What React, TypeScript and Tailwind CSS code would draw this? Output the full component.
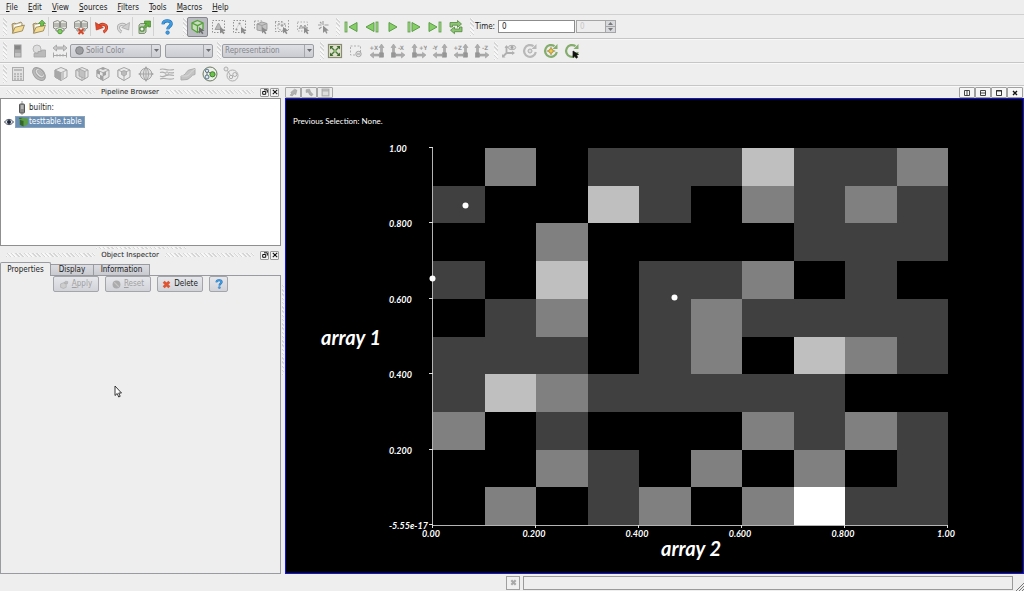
import { useState } from "react";
import type { ReactNode } from "react";

const HATCH =
  "bg-[repeating-linear-gradient(45deg,#d6d6d6_0_1px,#f8f8f8_1px_2px,#eeeeee_2px_3px)]";

function Icon({ children, size = "size-4" }: { children: ReactNode; size?: string }) {
  return (
    <svg viewBox="0 0 16 16" className={`${size} shrink-0`} fill="none" aria-hidden="true">
      {children}
    </svg>
  );
}

function ToolButton({ label, pressed, faded, children }: { label: string; pressed?: boolean; faded?: boolean; children: ReactNode }) {
  return (
    <button
      type="button"
      aria-label={label}
      className={`flex h-5 w-[21px] shrink-0 items-center justify-center rounded-[2px] ${
        pressed ? "border border-[#85878c] bg-[#b9bbc1]" : ""
      } ${faded ? "opacity-75" : ""}`}
    >
      <Icon>{children}</Icon>
    </button>
  );
}

function Handle() {
  return <span className={`h-[18px] w-1 shrink-0 ${HATCH}`} />;
}

function Separator() {
  return <span className="-ml-px h-[19px] w-px shrink-0 bg-[#d2d2d2]" />;
}

function Toolbar({ label, height = "h-6", children }: { label: string; height?: string; children: ReactNode }) {
  return (
    <div role="toolbar" aria-label={label} className={`flex shrink-0 items-center border-b border-[#c6c6c6] pl-[3px] shadow-[0_1px_0_#f8f8f8] ${height}`}>
      {children}
    </div>
  );
}

function Combo({ label, value, width, icon }: { label: string; value: string; width: string; icon?: ReactNode }) {
  return (
    <span className={`flex h-[14px] shrink-0 items-center rounded-[2px] border border-[#9b9da3] bg-linear-to-b from-[#dfe0e5] to-[#cbccd2] ${width}`}>
      {icon}
      <select aria-label={label} disabled className="h-3 min-w-0 flex-1 appearance-none bg-transparent pl-[2px] leading-3 text-[#85878b] opacity-100">
        <option>{value}</option>
      </select>
      <span className="flex h-3 w-[9px] items-center justify-center border-l border-[#a5a7ad]">
        <svg viewBox="0 0 5 3" className="h-[3px] w-[5px]"><path d="M0 0h5L2.5 3z" fill="#6b6d72" /></svg>
      </span>
    </span>
  );
}

/* ---------- icon drawings ---------- */

const Folder = (
  <>
    <path d="M2 5l3-1 1 1 5-2 1 1v3l-9 7z" fill="#d9c48c" stroke="#8d7a4a" strokeWidth=".8" />
    <path d="M3.5 6l8-2.2V10l-7 4z" fill="#fdfdfa" stroke="#b9b29a" strokeWidth=".5" />
    <path d="M2.4 14.3L5 8.3l9.4-2.2-2 5.8z" fill="#f5dc94" stroke="#8d7a4a" strokeWidth=".8" />
  </>
);
const Server = (
  <>
    <path d="M1.5 3l4-1.5 2 1v6l-4 1.5-2-1zM14.5 3l-4-1.5-2 1v6l4 1.5 2-1z" fill="#e4e4de" stroke="#85857e" strokeWidth=".9" />
    <path d="M2 5h5M9 5h5M2 7h5M9 7h5" stroke="#85857e" strokeWidth=".9" />
    <path d="M4 10v2h8v-2" stroke="#85857e" strokeWidth="1" />
  </>
);
const Arrow = <path d="M9 8v6.500l1.700-1.500 1.500 2.200 1.300-.9-1.500-2.100 2.500-.5z" fill="#6c6c6c" />;
const Dotted = <rect x="1.500" y="1.500" width="12" height="12" stroke="#777" strokeWidth="1" strokeDasharray="1.500 1.500" />;
const Grip = "#9a9a9a";

function Cube({ stroke = "#8f8f8f", fill = "#dcdcdc", side = "#a9a9a9" }) {
  return (
    <>
      <path d="M8 1.500l6 2.500v7l-6 3.500L2 11V4z" fill={fill} stroke={stroke} strokeWidth="1" />
      <path d="M2 4l6 2.700v7.800L2 11z" fill={side} stroke={stroke} strokeWidth=".9" />
      <path d="M8 6.700L14 4" stroke={stroke} strokeWidth=".9" />
    </>
  );
}

function Play({ x = 4, flip = false }) {
  return flip ? (
    <path d={`M${x + 8} 3.500v9L${x} 8z`} fill="#86cf66" stroke="#5c9c48" strokeWidth="1" />
  ) : (
    <path d={`M${x} 3.500v9l8-4.500z`} fill="#86cf66" stroke="#5c9c48" strokeWidth="1" />
  );
}
function Bar({ x }: { x: number }) {
  return <rect x={x} y="3" width="2" height="10" fill="#a5dc8b" stroke="#5c9c48" strokeWidth=".8" />;
}

function AxisIcon({ text, right }: { text: string; right: boolean }) {
  return (
    <>
      <text x={right ? 8 : 0.5} y="6.500" fontSize="6" fontWeight="bold" fill={Grip}>{text}</text>
      <g transform={right ? "translate(16 0) scale(-1 1)" : undefined} fill="#adadad" stroke="#969696" strokeWidth=".5">
        <path d="M12.500 1L15 4.500h-1.500V10h-2V4.500H10z" />
        <path d="M1 12l3.500-2.700v1.800H10v2H4.500V15z" />
        <rect x="10.300" y="9.800" width="4.400" height="4.400" fill="#969696" />
      </g>
    </>
  );
}

function Orbit({ stroke, children }: { stroke: string; children?: ReactNode }) {
  return (
    <>
      <path d="M13.800 9A5.900 5.900 0 1 1 11.500 3.200" stroke={stroke} strokeWidth="2.200" />
      <path d="M9.500 6h5V1z" fill={stroke} />
      {children}
    </>
  );
}

const Question = ({ size }: { size?: string }) => (
  <Icon size={size}>
    <path d="M4 5.200C4 .6 12.600.8 12.200 5c-.2 2.400-3.400 2.500-3.400 5.200" stroke="#1f6fb5" strokeWidth="3.200" />
    <path d="M4 5.200C4 .6 12.600.8 12.200 5c-.2 2.400-3.400 2.500-3.400 5.200" stroke="#3f9be0" strokeWidth="2" />
    <circle cx="8.600" cy="13.600" r="1.800" fill="#3f9be0" stroke="#1f6fb5" strokeWidth=".6" />
  </Icon>
);

const Cross = ({ color, size }: { color: string; size?: string }) => (
  <Icon size={size}>
    <path d="M3 3l10 10M13 3L3 13" stroke={color} strokeWidth="5" />
  </Icon>
);

/* ---------- menus and toolbars ---------- */

const MENUS = ["File", "Edit", "View", "Sources", "Filters", "Tools", "Macros", "Help"];

function MenuBar() {
  return (
    <nav className="flex h-[15px] items-end border-b border-[#d0d0d0] pl-px">
      {MENUS.map((name) => (
        <button key={name} type="button" className="px-[5px] leading-[13px]">
          <span className="underline underline-offset-1">{name[0]}</span>{name.slice(1)}
        </button>
      ))}
    </nav>
  );
}

function MainToolbar() {
  return (
    <Toolbar label="Main controls">
      <Handle />
      <ToolButton label="Open">{Folder}</ToolButton>
      <ToolButton label="Save data">{Folder}<path d="M11 1l3.500 3.500h-2V7h-3V4.500h-2z" fill="#6cbf4b" stroke="#47862f" strokeWidth=".6" /></ToolButton>
      <Separator />
      <ToolButton label="Connect">{Server}<circle cx="8" cy="12.500" r="2.300" fill="#7fce60" stroke="#4b8f35" strokeWidth=".9" /></ToolButton>
      <ToolButton label="Disconnect">{Server}<path d="M5.500 10l5 5M10.500 10l-5 5" stroke="#d2492a" strokeWidth="2" /></ToolButton>
      <Separator />
      <ToolButton label="Undo">
        <path d="M4 8.500C7 3.500 13.500 5 12.500 9.500c-.4 1.800-1.500 2.800-3 3.600" stroke="#b5341b" strokeWidth="3" />
        <path d="M4 8.500C7 3.500 13.500 5 12.500 9.500c-.4 1.800-1.500 2.800-3 3.600" stroke="#e8583a" strokeWidth="1.800" />
        <path d="M1.500 3.500l.8 7.500 7-2.500z" fill="#e0492b" stroke="#b5341b" strokeWidth=".7" />
      </ToolButton>
      <ToolButton label="Redo">
        <path d="M12 8.500C9 3.500 2.500 5 3.500 9.500c.4 1.800 1.500 2.800 3 3.600" stroke="#a2a2a2" strokeWidth="3" />
        <path d="M12 8.500C9 3.500 2.500 5 3.500 9.500c.4 1.800 1.500 2.800 3 3.600" stroke="#dadada" strokeWidth="1.600" />
        <path d="M14.500 3.500l-.8 7.500-7-2.500z" fill="#cfcfcf" stroke="#a2a2a2" strokeWidth=".7" />
      </ToolButton>
      <Separator />
      <ToolButton label="Auto apply">
        <path d="M3 6l1.500-1.500H10V13l-1.500 1.500H3z" fill="#c3cdbb" stroke="#7d9470" />
        <circle cx="6" cy="10" r="2.200" fill="#f4f8f1" stroke="#5a8d46" strokeWidth="1.300" />
        <path d="M8.500 2h6v6h-2V6.500L9.500 9 8 7.500 10.500 4.500h-2z" fill="#62b040" stroke="#47862f" strokeWidth=".7" />
      </ToolButton>
      <Separator />
      <button type="button" aria-label="Help" className="flex h-5 w-[25px] items-center justify-center"><Question /></button>
      <span className="w-1" />
      <Handle />
      <ToolButton label="Interact" pressed>
        <path d="M7.500 1.500L13 4v6l-5.500 3.500L2 10V4z" fill="#c9dcc2" stroke="#55a238" strokeWidth="1.300" />
        <path d="M2 4l5.500 2.700L13 4M7.500 6.700v6.800" stroke="#55a238" strokeWidth="1.300" />
        {Arrow}
      </ToolButton>
      <ToolButton label="Select cells on" faded>{Dotted}<path d="M7.500 4l3.500 6.500H4z" fill="#a8a8a8" stroke="#888" />{Arrow}</ToolButton>
      <ToolButton label="Select points on" faded>{Dotted}<path d="M7.500 4l3.500 6.500M7.500 4L4 10.500" stroke="#aaa" strokeDasharray="1 1" /><circle cx="7.500" cy="4.500" r="1" fill="#777" /><circle cx="4.500" cy="10.500" r="1" fill="#777" />{Arrow}</ToolButton>
      <ToolButton label="Select cells through" faded><path d="M1.500 2h9M1.500 2v9" stroke="#858585" strokeDasharray="1.500 1.500" /><path d="M4 5l5-2 5 1.500v6L9 12l-5-1z" fill="#b5b5b5" stroke="#858585" /><path d="M4 5l5 1.500L14 4.500M9 6.500V12" stroke="#858585" />{Arrow}</ToolButton>
      <ToolButton label="Select points through" faded><path d="M1 2.500h8M1 12.500h8M1.500 3v9M14.500 1v10" stroke="#858585" strokeDasharray="1.500 1.500" /><path d="M4 5l4-1.500L11.500 5v5L8 11.500 4 10zM4 5l4 1.500L11.500 5" stroke="#999" strokeDasharray="2 1" /><circle cx="8" cy="6.500" r="1.300" fill="#888" />{Arrow}</ToolButton>
      <ToolButton label="Select block" faded><rect x="2.500" y="3" width="10" height="9" stroke="#9a9a9a" strokeDasharray="1.500 1.500" /><path d="M4 10l2-4 2 3 2-3 2 4" stroke="#888" fill="#bdbdbd" />{Arrow}</ToolButton>
      <ToolButton label="Pick" faded><path d="M7 2v4M2 6h3.500M8.500 6h4M4 3l1.500 1.500M3 10l2.500-2" stroke="#858585" strokeWidth="1.100" /><path d="M7 6.500V14l2-1.700 1.300 2.400 1.200-.7-1.200-2.300 2.500-.3z" fill="#707070" /></ToolButton>
      <span className="w-[2px]" />
      <Handle />
      <ToolButton label="First frame"><Bar x={2} /><Play x={6} flip /></ToolButton>
      <ToolButton label="Previous frame"><Play x={2} flip /><Bar x={12} /></ToolButton>
      <ToolButton label="Play"><Play x={4} /></ToolButton>
      <ToolButton label="Next frame"><Bar x={2} /><Play x={6} /></ToolButton>
      <ToolButton label="Last frame"><Play x={2} /><Bar x={12} /></ToolButton>
      <ToolButton label="Loop">
        <path d="M2 8V3.500h7.500V1.500L13.500 5l-4 3.300V6.200H4.500V8zM14 8v4.700H6.500v2L2.500 11.200l4-3.200v2h5V8z" fill="#8cc573" stroke="#54883d" strokeWidth=".8" />
      </ToolButton>
      <span className="w-1" />
      <Handle />
      <label htmlFor="time" className="shrink-0 pl-px">Time:</label>
      <input id="time" defaultValue="0" className="ml-[3px] h-[13px] w-[77px] border border-[#8c8c8c] bg-white pl-[3px] leading-3 outline-none" />
      <input aria-label="Time step" disabled defaultValue="0" className="ml-px h-[13px] w-[30px] border border-[#a5a5a5] bg-[#ededed] pl-[3px] leading-3 text-[#c8c8c8]" />
      <span className="flex h-[13px] w-[10px] flex-col border border-l-0 border-[#a5a5a5] bg-[#d8d9dd]">
        <button type="button" aria-label="Step up" className="flex flex-1 items-center justify-center border-b border-[#a5a5a5]"><svg viewBox="0 0 5 3" className="h-[3px] w-[5px]"><path d="M0 3h5L2.500 0z" fill="#777" /></svg></button>
        <button type="button" aria-label="Step down" className="flex flex-1 items-center justify-center"><svg viewBox="0 0 5 3" className="h-[3px] w-[5px]"><path d="M0 0h5L2.500 3z" fill="#777" /></svg></button>
      </span>
    </Toolbar>
  );
}

function DisplayToolbar() {
  return (
    <Toolbar label="Display controls">
      <Handle />
      <ToolButton label="Color legend">
        <rect x="4.500" y="2" width="6.500" height="12" fill="#a8a8a8" stroke="#9b9b9b" />
        <rect x="5" y="2.500" width="5.500" height="4" fill="#858585" /><rect x="5" y="10" width="5.500" height="3.500" fill="#c2c2c2" />
      </ToolButton>
      <ToolButton label="Edit color map" faded><circle cx="6" cy="6" r="4" fill="#d8d8d8" stroke="#a5a5a5" /><path d="M3 10.500h4v-2h3.500V7h4v7H3z" fill="#a9a9a9" stroke="#8d8d8d" strokeWidth=".8" /></ToolButton>
      <ToolButton label="Rescale range"><path d="M1 5l3.500-3v2h7V2L15 5l-3.500 3V6h-7v2z" fill="#c9c9c9" stroke="#999" strokeWidth=".7" /><path d="M1.500 9.500v5M14.500 9.500v5M1.500 12.500h13M5 11v2.500M8 11v2.500M11 11v2.500" stroke="#a8a8a8" /></ToolButton>
      <Combo label="Color by" value="Solid Color" width="w-[91px]" icon={<svg viewBox="0 0 10 10" className="ml-1 size-[9px] shrink-0"><circle cx="5" cy="5" r="4.300" fill="#9c9da0" stroke="#77797d" /></svg>} />
      <span className="w-1" />
      <Combo label="Component" value="" width="w-[48px]" />
      <span className="w-1" />
      <Handle />
      <span className="w-px" />
      <Combo label="Representation" value="Representation" width="w-[92px]" />
      <span className="w-[6px]" />
      <Handle />
      <ToolButton label="Reset camera">
        <rect x="1.500" y="1.500" width="13" height="13" fill="#dfe2cf" stroke="#8a8c74" strokeWidth="1.200" />
        <path d="M4 4l8 8M12 4l-8 8" stroke="#4f7340" strokeWidth="1.400" />
        <path d="M3 3h3.500L3 6.500zM13 3v3.500L9.500 3zM3 13V9.500L6.500 13zM13 13H9.500L13 9.500z" fill="#3f6b2c" />
        <circle cx="8" cy="8" r="1.500" fill="#86bb6c" />
      </ToolButton>
      <ToolButton label="Zoom to box"><rect x="2.500" y="3" width="10" height="9" stroke="#b0b0b0" strokeDasharray="2 1.500" /><circle cx="10.500" cy="11" r="2.700" fill="#e5e5e5" stroke="#a5a5a5" /><path d="M9 11h3" stroke="#999" /></ToolButton>
      <ToolButton label="View +X"><AxisIcon text="+X" right={false} /></ToolButton>
      <ToolButton label="View -X"><AxisIcon text="-X" right /></ToolButton>
      <ToolButton label="View +Y"><AxisIcon text="+Y" right /></ToolButton>
      <ToolButton label="View -Y"><AxisIcon text="-Y" right={false} /></ToolButton>
      <ToolButton label="View +Z"><AxisIcon text="+Z" right={false} /></ToolButton>
      <ToolButton label="View -Z"><AxisIcon text="-Z" right /></ToolButton>
      <span className="w-[2px]" />
      <Handle />
      <ToolButton label="Show orientation axes" faded><path d="M5.500 3v7h7M5.500 10L2 13.500" stroke="#9c9c9c" strokeWidth="1.800" /><path d="M3.500 5l2-3 2 3zM11 8l3 2-3 2zM1 11v3.500h3.500z" fill="#9c9c9c" /><ellipse cx="11" cy="4.500" rx="3.700" ry="2.200" fill="#ddd" stroke="#999" /><circle cx="11" cy="4.500" r="1.400" fill="#8a8a8a" /></ToolButton>
      <ToolButton label="Show center"><Orbit stroke="#b8b8b8"><circle cx="8" cy="8" r="2" fill="#ddd" stroke="#adadad" /></Orbit></ToolButton>
      <ToolButton label="Reset center"><Orbit stroke="#84ad6d"><path d="M8 3.800v8.400M3.800 8h8.400" stroke="#8a8455" /><circle cx="8" cy="8" r="2.200" fill="#f0c94e" stroke="#a98326" strokeWidth=".8" /></Orbit></ToolButton>
      <ToolButton label="Pick center"><Orbit stroke="#84ad6d"><path d="M9 8v6.500l1.700-1.500 1.500 2.200 1.500-1-1.500-2.100 2.300-.6z" fill="#111" stroke="#111" strokeWidth=".7" /></Orbit></ToolButton>
    </Toolbar>
  );
}

function FilterToolbar() {
  return (
    <Toolbar label="Common filters" height="h-[23px]">
      <Handle />
      <ToolButton label="Calculator" faded><rect x="2.500" y="1.500" width="11" height="13" fill="#dedede" stroke="#989898" /><path d="M4 4h8" stroke="#aaa" strokeWidth="2" /><path d="M4 8h8M4 10.500h8M4 13h8" stroke="#999" strokeWidth="1.400" strokeDasharray="2 1" /></ToolButton>
      <ToolButton label="Contour" faded><ellipse cx="8" cy="8" rx="7.500" ry="5" transform="rotate(45 8 8)" fill="#aaa" stroke="#858585" /><ellipse cx="8" cy="7" rx="5.500" ry="3.200" transform="rotate(45 8 8)" fill="#d6d6d6" stroke="#888" /><ellipse cx="8" cy="6.500" rx="3.500" ry="1.500" transform="rotate(45 8 8)" fill="#aaa" stroke="#888" strokeWidth=".6" /></ToolButton>
      <span className="w-px" />
      <ToolButton label="Clip" faded><Cube fill="#e8e8e8" side="#909090" /><path d="M8 6.700L11 5.400v7.300l-3 1.800z" fill="#b9b9b9" /></ToolButton>
      <ToolButton label="Slice" faded><Cube fill="#e5e5e5" side="#dcdcdc" /><path d="M5 2.800l6 2.700v7.300L5 10z" fill="#b2b2b2" stroke="#8a8a8a" strokeWidth=".8" /></ToolButton>
      <ToolButton label="Threshold" faded><Cube fill="#e2e2e2" side="#e8e8e8" /><path d="M2 4l3 1.300v3.500L2 7.500zM5 8.800l3 1.400v4L5 12.700zM8 6.700l3-1.300v3.700L8 10.200zM5 2.800l3-1.200 3 1.200L8 4z" fill="#888" /></ToolButton>
      <ToolButton label="Extract subset" faded><Cube fill="#eaeaea" side="#eaeaea" /><path d="M5.500 5.500L8 4.500l2.500 1v3L8 10 5.500 8.500z" fill="#aaa" stroke="#858585" strokeWidth=".7" /></ToolButton>
      <span className="w-px" />
      <ToolButton label="Glyph" faded><circle cx="8" cy="8" r="5.800" fill="#dcdcdc" stroke="#8f8f8f" /><ellipse cx="8" cy="8" rx="2.500" ry="5.800" stroke="#8f8f8f" /><path d="M1 8h14M8 1v14" stroke="#8f8f8f" /><path d="M6.500 2.500L8 0l1.500 2.500zM6.500 13.500L8 16l1.500-2.500zM2.500 6.500L0 8l2.500 1.500zM13.500 6.500L16 8l-2.500 1.500z" fill="#8f8f8f" /></ToolButton>
      <ToolButton label="Stream tracer" faded><path d="M1 3.500c4-2 6 2 14 0M1 6.500c3-1 4 0 5 .5M1 10c3 1.500 4 .5 6-.5s4-1 8 0M1 13c5-2 8 1.500 14-.5M10 6.500c2 .8 3 .5 5 0" stroke="#999" strokeWidth="1.200" /><circle cx="8" cy="7.500" r="1.600" fill="#ddd" stroke="#999" /></ToolButton>
      <ToolButton label="Warp" faded><path d="M1 10c5-.5 5-5 8-6l6-1.500v6c-4 0-4 4-8 5l-6 .5z" fill="#b6b6b6" stroke="#999" /><path d="M1 10h6c3-.8 4-5 8-7" stroke="#d8d8d8" strokeWidth=".8" /></ToolButton>
      <span className="w-px" />
      <ToolButton label="Group datasets"><circle cx="8" cy="8" r="7" fill="#eef0ea" stroke="#6c7a62" strokeWidth="1" /><circle cx="5" cy="4.800" r="1.700" fill="#dce8f3" stroke="#55738c" /><circle cx="10.500" cy="8.300" r="2.600" fill="#6cc24a" stroke="#3d7f28" /><circle cx="5" cy="11" r="2" fill="#dce8f3" stroke="#55738c" /><path d="M5 6.500V9M6.300 6l2 1" stroke="#555" strokeWidth=".8" /></ToolButton>
      <ToolButton label="Extract level" faded><circle cx="3" cy="3" r="2" fill="#e5e5e5" stroke="#999" /><circle cx="9.500" cy="9.500" r="5.500" fill="#ececec" stroke="#999" /><circle cx="8" cy="11" r="1.700" stroke="#999" /><circle cx="11.800" cy="8.500" r="2" stroke="#999" /><path d="M4.500 4.500l3 5M9.200 10l1-.6" stroke="#999" /></ToolButton>
    </Toolbar>
  );
}

/* ---------- docks ---------- */

function DockTitle({ title }: { title: string }) {
  return (
    <div className="flex h-3 shrink-0 items-center gap-[6px] pr-[2px] pl-[6px]">
      <span className={`h-[4px] flex-1 ${HATCH}`} />
      <h2 className="text-[7px] leading-3 font-normal [font-family:'DejaVu_Sans',sans-serif]">{title}</h2>
      <span className={`h-[4px] flex-1 ${HATCH}`} />
      <span className="flex gap-px">
        <button type="button" aria-label={`Float ${title}`} className="flex size-[9px] items-center justify-center rounded-[1px] border border-[#9a9a9a] bg-[#f4f4f4]">
          <svg viewBox="0 0 6 6" className="size-[6px]" fill="none"><path d="M2 .8h3.300v2.800M.7 2.500h3v2.800h-3z" stroke="#111" strokeWidth="1" /></svg>
        </button>
        <button type="button" aria-label={`Close ${title}`} className="flex size-[9px] items-center justify-center rounded-[1px] border border-[#9a9a9a] bg-[#f4f4f4]">
          <svg viewBox="0 0 6 6" className="size-[6px]"><path d="M.8.8l4.400 4.400M5.200.8L.8 5.200" stroke="#111" strokeWidth="1.100" /></svg>
        </button>
      </span>
    </div>
  );
}

function PipelineBrowser() {
  return (
    <section>
      <DockTitle title="Pipeline Browser" />
      <ul className="h-[148px] border border-[#8f8f8f] bg-white pt-[2px]">
        <li className="flex h-[14px] items-center pl-[17px]">
          <svg viewBox="0 0 8 14" className="h-[14px] w-2"><path d="M4 0v14" stroke="#999" /><rect x="1.500" y="3" width="5" height="9" rx=".8" fill="#8c8c8c" stroke="#555" /><path d="M3 5h2.500M3 7h2.500" stroke="#ddd" /></svg>
          <span className="pl-[3px] leading-3">builtin:</span>
        </li>
        <li className="flex h-[13px] items-center">
          <button type="button" aria-label="Toggle visibility" className="flex w-[15px] justify-center">
            <svg viewBox="0 0 10 8" className="h-2 w-[10px]" fill="none"><path d="M.5 4C3 .5 7 .5 9.500 4 7 7.500 3 7.500.5 4z" fill="#dfe3ea" stroke="#39404f" strokeWidth=".9" /><circle cx="5" cy="3.900" r="2" fill="#1b2338" /></svg>
          </button>
          <span className="flex h-[10px] items-center bg-[#6b8fb5] pr-[2px] pl-[2px] text-white ring-1 ring-[#8aa3bd]">
            <svg viewBox="0 0 12 12" className="size-[11px]"><path d="M1 2h4v2L1 3z" fill="#356f26" /><path d="M2 4l3-2 6 1v6l-5 2.500L2 9.500z" fill="#5d9e48" /><path d="M2 4l4 1.500v6L2 9.500z" fill="#35672a" /></svg>
            <span className="leading-3">testtable.table</span>
          </span>
        </li>
      </ul>
    </section>
  );
}

const TABS = ["Properties", "Display", "Information"];
const TAB_WIDTHS = ["w-[51px]", "w-[44px]", "w-[57px]"];

function ObjectInspector() {
  const [tab, setTab] = useState(0);
  const button = "flex h-4 items-center justify-center gap-[3px] rounded-[2px] border border-[#a3a5aa] bg-linear-to-b from-[#e6e7eb] to-[#d2d3d9] leading-3";
  return (
    <section className="flex flex-1 flex-col">
      <DockTitle title="Object Inspector" />
      <div role="tablist" className="flex h-[14px] items-end">
        {TABS.map((name, i) => (
          <button
            key={name}
            type="button"
            role="tab"
            aria-selected={tab === i}
            onClick={() => setTab(i)}
            className={`border border-b-0 border-[#999ba0] leading-[10px] ${TAB_WIDTHS[i]} ${i > 0 ? "-ml-px" : ""} ${
              tab === i ? "relative z-10 -mb-px h-[14px] rounded-t-[2px] bg-[#eeeeee]" : "h-[11px] bg-linear-to-b from-[#dcdde2] to-[#c9cad0]"
            }`}
          >
            {name}
          </button>
        ))}
      </div>
      <div role="tabpanel" className="relative flex-1 border border-[#999ba0]">
        <div className="flex justify-center gap-[6px]">
          <button type="button" disabled className={`${button} w-[46px] text-[#a0a0a0]`}>
            <Icon size="size-[9px]"><path d="M1 7l5-2 5 2v6l-5 2-5-2z" fill="#cdcdcd" stroke="#a5a5a5" /><path d="M7 5l3-3 4 1-1 4z" fill="#bcbcbc" stroke="#a5a5a5" /></Icon>
            <span><span className="underline">A</span>pply</span>
          </button>
          <button type="button" disabled className={`${button} w-[46px] text-[#a0a0a0]`}>
            <Icon size="size-[9px]"><circle cx="8" cy="8" r="7" fill="#ababab" /><path d="M4 4l8 8" stroke="#c5c5c5" strokeWidth="2" /></Icon>
            <span><span className="underline">R</span>eset</span>
          </button>
          <button type="button" className={`${button} w-[46px]`}>
            <Cross color="#dd5533" size="size-[9px]" />
            Delete
          </button>
          <button type="button" aria-label="Help" className={`${button} w-[19px]`}><Question size="size-[10px]" /></button>
        </div>
        <svg viewBox="0 0 8 13" className="absolute top-[109px] left-[113px] h-[13px] w-2"><path d="M1 1v9.500l2.200-2 1.500 3.500 1.500-.7-1.500-3.300H7.500z" fill="#fff" stroke="#222" strokeWidth=".9" /></svg>
      </div>
    </section>
  );
}

/* ---------- density chart ---------- */

const CELLS = [
  "0201113112",
  "1003102121",
  "0020000111",
  "1030112010",
  "0120121111",
  "1110120321",
  "1321111100",
  "2010002121",
  "0021020201",
  "0201202411",
];
const SHADES = ["#000000", "#404040", "#808080", "#bfbfbf", "#ffffff"];
const X0 = 146;
const Y0 = 48;
const W = 515;
const H = 377;
const X_LABELS = ["0.00", "0.200", "0.400", "0.600", "0.800", "1.00"];
const Y_LABELS = ["-5.55e-17", "0.200", "0.400", "0.600", "0.800", "1.00"];
const POINTS = [[178, 105], [145, 178], [387, 197]];

function DensityChart() {
  return (
    <svg viewBox="0 0 735 472" role="img" aria-label="array 1 against array 2" className="block h-auto w-full [font-family:Lato,sans-serif]" fill="#fff">
      <text x="6" y="24" fontSize="8">Previous Selection: None.</text>
      <g shapeRendering="crispEdges">
        {CELLS.map((row, r) =>
          [...row].map((level, c) => {
            const left = Math.round(X0 + (c * W) / 10);
            const right = Math.round(X0 + ((c + 1) * W) / 10);
            const top = Math.round(Y0 + (r * H) / 10);
            const bottom = Math.round(Y0 + ((r + 1) * H) / 10);
            return <rect key={`${r}-${c}`} x={left} y={top} width={right - left} height={bottom - top} fill={SHADES[Number(level)]} />;
          }),
        )}
        <path d={`M${X0 - 1} ${Y0}h1v${H}h${W}v1h-${W + 1}z`} fill="#b4b4b4" />
        {X_LABELS.map((t, i) => <rect key={t} x={X0 - 1 + Math.round((i * W) / 5)} y={Y0 + H} width="1" height="3" fill="#ddd" />)}
        {Y_LABELS.map((t, i) => <rect key={t} x={X0 - 4} y={Y0 - 1 + Math.round(((5 - i) * H) / 5)} width="4" height="1" fill="#ddd" />)}
      </g>
      <g fontSize="9" fontWeight="bold" fontStyle="italic">
        {X_LABELS.map((t, i) => <text key={t} x={X0 - 2 + (i * W) / 5} y="437" textAnchor="middle">{t}</text>)}
        {Y_LABELS.map((t, i) => <text key={t} x={102} y={Y0 + 4 + ((5 - i) * H) / 5}>{t}</text>)}
      </g>
      <g fontSize="20" fontWeight="bold" fontStyle="italic" textAnchor="middle">
        <text x="64" y="245">array 1</text>
        <text x="404" y="456">array 2</text>
      </g>
      {POINTS.map(([x, y]) => <circle key={x} cx={x + 0.5} cy={y + 0.5} r="3" />)}
    </svg>
  );
}

function RenderView() {
  const left = "flex h-[11px] w-4 items-center justify-center rounded-[1px] border border-[#a8a8a8] bg-[#ececec]";
  const right = "flex h-[11px] w-4 items-center justify-center rounded-[1px] border border-[#a0a0a0] bg-[#f6f6f6]";
  return (
    <section className="flex min-w-0 flex-1 flex-col">
      <div className="flex h-3 shrink-0 items-end justify-between pr-px">
        <span className="flex">
          <button type="button" aria-label="Undo camera" className={left}><Icon size="size-[9px]"><path d="M2 13l3-4-2-1 7-6 4 2-2 8-3-2-3 4z" fill="#b0b0b0" stroke="#999" /></Icon></button>
          <button type="button" aria-label="Redo camera" className={left}><Icon size="size-[9px]"><path d="M2 3l6-1 2 5 4 4-2 3-4-2-2-5-4 1z" fill="#b0b0b0" stroke="#999" /></Icon></button>
          <button type="button" aria-label="View options" className={left}><Icon size="size-[9px]"><rect x="2" y="2" width="12" height="12" fill="#ddd" stroke="#aaa" strokeWidth="2" /><path d="M2 5h12" stroke="#aaa" strokeWidth="2" /></Icon></button>
        </span>
        <span className="flex">
          <button type="button" aria-label="Split horizontal" className={right}><svg viewBox="0 0 6 6" className="size-[6px]" fill="none"><path d="M.5.500h5v5h-5zM3 0v6" stroke="#333" strokeWidth=".9" /></svg></button>
          <button type="button" aria-label="Split vertical" className={right}><svg viewBox="0 0 6 6" className="size-[6px]" fill="none"><path d="M.5.500h5v5h-5zM0 3h6" stroke="#333" strokeWidth=".9" /></svg></button>
          <button type="button" aria-label="Maximize" className={right}><svg viewBox="0 0 6 6" className="size-[6px]" fill="none"><path d="M.5.500h5v5h-5zM0 1h6" stroke="#222" strokeWidth=".9" /></svg></button>
          <button type="button" aria-label="Close view" className={right}><svg viewBox="0 0 6 6" className="size-[6px]"><path d="M1 1l4 4M5 1L1 5" stroke="#111" strokeWidth="1.400" /></svg></button>
        </span>
      </div>
      <div className="flex-1 border border-[#1010f0] bg-black p-px">
        <DensityChart />
      </div>
    </section>
  );
}

export default function App() {
  return (
    <div className="flex min-h-screen flex-col bg-[#eeeeee] text-[8px] text-[#1a1a1a] [font-family:'DejaVu_Sans_Condensed','DejaVu_Sans',sans-serif]">
      <MenuBar />
      <MainToolbar />
      <DisplayToolbar />
      <FilterToolbar />
      <main className="flex flex-1">
        <div className="flex w-[281px] shrink-0 flex-col">
          <PipelineBrowser />
          <span className={`mx-auto mt-px h-[2px] w-[90px] shrink-0 ${HATCH}`} />
          <ObjectInspector />
        </div>
        <div className="flex w-1 shrink-0 items-center justify-center"><span className={`h-[90px] w-[2px] ${HATCH}`} /></div>
        <RenderView />
      </main>
      <footer className="flex h-[17px] shrink-0 items-center gap-[3px] pl-[506px]">
        <button type="button" aria-label="Abort" disabled className="flex h-[14px] w-[14px] shrink-0 items-center justify-center border border-[#a0a0a0] bg-[#f0f0f0]"><Cross color="#a8a8a8" size="size-[7px]" /></button>
        <div role="progressbar" aria-label="Progress" className="h-[14px] flex-1 border border-[#9a9a9a]" />
        <svg viewBox="0 0 8 8" className="size-2 shrink-0 self-end"><path d="M0 8L8 0M3 8l5-5M6 8l2-2" stroke="#777" /></svg>
      </footer>
    </div>
  );
}
